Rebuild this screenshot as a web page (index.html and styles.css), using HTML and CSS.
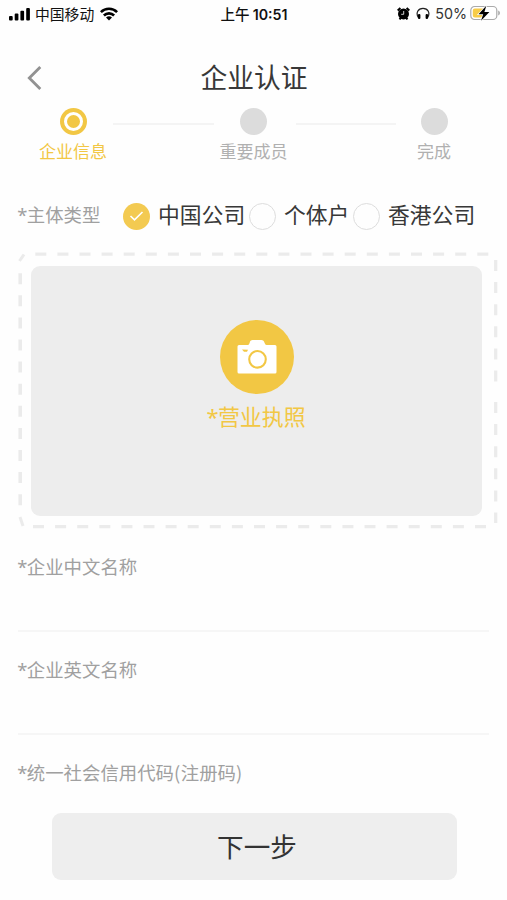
FILE: index.html
```html
<!DOCTYPE html>
<html lang="zh-CN">
<head>
<meta charset="utf-8">
<title>企业认证</title>
<link rel="stylesheet" href="styles.css">
</head>
<body>
<div class="status">
  <div class="status-left">
    <svg width="22" height="14" viewBox="0 0 22 14"><rect x="0" y="9" width="3.7" height="4.400" rx="1"/><rect x="5.700" y="6.600" width="3.700" height="6.800" rx="1"/><rect x="11.400" y="3.800" width="3.700" height="9.600" rx="1"/><rect x="17.200" y="1" width="3.700" height="12.400" rx="1"/></svg>
    <span class="carrier">中国移动</span>
    <svg width="18" height="14" viewBox="0 0 18 14" fill="none" stroke="#000" stroke-width="2.6"><path d="M.9 5.100a11.500 11.500 0 0 1 16.200 0M3.900 8.500a7.200 7.200 0 0 1 10.200 0"/><path d="M9 13.600l-3-3a4.300 4.300 0 0 1 6 0z" fill="#000" stroke="none"/></svg>
  </div>
  <div class="clock">上午 <b>10:51</b></div>
  <div class="status-right">
    <svg width="13" height="13" viewBox="0 0 13 13"><circle cx="6.500" cy="6.900" r="5.500"/><path d="M.7 3.400L3.400.9M12.300 3.400L9.600.9M2.500 12.400l1.500-1.800M10.500 12.400L9 10.600" stroke="#000" stroke-width="2"/><path d="M6.700 4v3.300H4.200" fill="none" stroke="#fff" stroke-width=".8"/></svg>
    <svg class="phones" width="14" height="13" viewBox="0 0 14 13"><path d="M2.600 11C-.8 6 2.200 1.300 7 1.300S14.800 6 11.400 11" fill="none" stroke="#222" stroke-width="1.200"/><rect x="2" y="7" width="2.400" height="5" rx="1"/><rect x="9.600" y="7" width="2.400" height="5" rx="1"/></svg>
    <span class="percent">50%</span>
    <svg width="31" height="17" viewBox="0 0 31 17"><rect x=".8" y="1.500" width="26" height="13" rx="3.800" fill="#fff" stroke="#aaa" stroke-width="1.200"/><path d="M4.800 3.500H14v9H4.800a2 2 0 0 1-2-2v-5a2 2 0 0 1 2-2z" fill="#f7cc48"/><path d="M28.200 5.500v5c2.300-.7 2.300-4.300 0-5z" fill="#aaa"/><path d="M16.300.8L8.500 9.200h4.700L11 15.800l8.400-8.900h-5z" stroke="#fff" stroke-width="1.400" paint-order="stroke"/></svg>
  </div>
</div>
<header class="nav">
  <svg class="back" width="16" height="26" viewBox="0 0 16 26"><path d="M13.300 2L2.300 13l11 11" fill="none" stroke="#929292" stroke-width="2.800"/></svg>
  <h1>企业认证</h1>
</header>
<div class="steps">
  <div class="step active"><i class="dot"><i></i></i><span>企业信息</span></div>
  <i class="line"></i>
  <div class="step"><i class="dot"></i><span>重要成员</span></div>
  <i class="line second-line"></i>
  <div class="step"><i class="dot"></i><span>完成</span></div>
</div>
<main>
  <div class="types">
    <span class="label"><b class="star">*</b>主体类型</span>
    <div class="option first"><i class="radio checked"><svg width="15" height="12" viewBox="0 0 15 12"><path d="M1.500 6l4 3.800L13.500 2" fill="none" stroke="#fff" stroke-width="1.600"/></svg></i><span>中国公司</span></div>
    <div class="option second"><i class="radio"></i><span>个体户</span></div>
    <div class="option"><i class="radio"></i><span>香港公司</span></div>
  </div>
  <div class="upload">
    <svg class="frame" width="481" height="278" viewBox="0 0 481 278" fill="none" stroke="#ebebeb" stroke-width="3.200" stroke-dasharray="11 11.100">
      <path d="M17.300 3.200H472"/>
      <path d="M15 275.600H471"/>
      <path d="M2.200 22.200V257" stroke-width="3.600"/>
      <path d="M477.700 9V132M477.700 151V272"/>
      <path d="M1.500 10L6 3.500M2 266l3 9" stroke-dasharray="none" stroke-width="3"/>
    </svg>
    <div class="panel">
      <div class="camera"><svg width="40" height="36" viewBox="0 0 40 36"><path d="M2 6h9q1 0 1.600-2L13 2.500Q13.500 1 15.500 1h9q2 0 2.500 1.500l.6 1.500Q28.200 6 29.500 6H38q1.500 0 1.500 1.500V33q0 1.500-1.500 1.500H2Q.5 34.500.5 33V7.500Q.5 6 2 6z" fill="#fff"/><circle cx="20.500" cy="20.300" r="8.300" fill="none" stroke="#f2c744" stroke-width="2.100"/><path d="M5 10.500l6 .2-1 2H7z" fill="#f2c744"/></svg></div>
      <span><b class="star">*</b>营业执照</span>
    </div>
  </div>
  <div class="field"><b class="star">*</b>企业中文名称</div>
  <div class="field"><b class="star">*</b>企业英文名称</div>
  <div class="field last"><b class="star">*</b>统一社会信用代码<span class="paren">(</span>注册码<span class="paren">)</span></div>
  <button class="next">下一步</button>
</main>
</body>
</html>
```
FILE: styles.css
```css
* { box-sizing: border-box; }
body {
  margin: 0;
  width: 507px;
  height: 900px;
  overflow: hidden;
  background: #fefefe;
  color: #383838;
  font-family: "Noto Sans CJK SC", sans-serif;
}
svg { display: block; flex: none; }
i { display: block; flex: none; }
span { white-space: nowrap; }
.star {
  display: inline-block;
  width: .48em;
  font-family: "Noto Sans", sans-serif;
  font-weight: 400;
  line-height: 1;
  text-indent: -.04em;
}
.paren { display: inline-block; width: .37em; }
.status {
  display: grid;
  grid-template-columns: 1fr auto 1fr;
  align-items: center;
  height: 28px;
  padding: 0 6px 1px 9px;
  color: #111;
  line-height: 27px;
}
.status-left, .status-right { display: flex; align-items: center; }
.carrier { margin: 0 6px 0 4px; font-size: 14.8px; }
.clock { margin-right: 2px; font-size: 14.5px; font-weight: 500; }
.clock b { font: 600 14.2px Inter, sans-serif; }
.status-right { justify-content: flex-end; }
.phones { margin: 0 5px 0 6px; }
.percent { margin-right: 3px; font: 14.3px Inter, sans-serif; color: #333; }
.nav {
  display: grid;
  grid-template-columns: 50px 1fr 50px;
  align-items: center;
  height: 78px;
  padding-top: 22px;
}
.back { margin-left: 27px; }
.nav h1 {
  margin: -2px 0 0 1px;
  font-size: 26.8px;
  font-weight: 400;
  line-height: 40px;
  text-align: center;
}
.steps { display: flex; height: 80px; padding: 2px 38px 0 38px; }
.step {
  display: flex;
  flex-direction: column;
  align-items: center;
  width: 70px;
  color: #b0b0b0;
  font-size: 17px;
  line-height: 24px;
}
.step span { margin-top: 4px; }
.dot { width: 27px; height: 27px; border-radius: 50%; background: #dcdcdc; }
.active { color: #f2c744; }
.active .dot { padding: 4px; background: #f2c744; }
.active .dot i {
  width: 19px;
  height: 19px;
  border: 3px solid #fff;
  border-radius: 50%;
}
.line { flex: 1; height: 2px; margin: 15px 5px; background: #f4f4f4; }
.second-line { margin: 15px 3px 0 7px; }
main { padding: 0 10px 0 18px; }
.types { display: flex; align-items: center; height: 60px; }
.label { width: 105px; margin-top: -4px; color: #a0a0a0; font-size: 18.4px; line-height: 28px; }
.option { display: flex; align-items: center; font-size: 21.8px; line-height: 32px; }
.option span { margin: -5px 0 0 8px; }
.first { width: 126px; }
.second { width: 104px; }
.radio {
  display: flex;
  align-items: center;
  justify-content: center;
  width: 27px;
  height: 27px;
  border: 1px solid #ddd;
  border-radius: 50%;
}
.checked { border: 0; background: #f3ca51; }
.upload { display: grid; height: 278px; margin-top: 5px; }
.frame { grid-area: 1 / 1; }
.panel {
  grid-area: 1 / 1;
  display: flex;
  flex-direction: column;
  align-items: center;
  width: 451px;
  height: 250px;
  margin: 15px 0 0 13px;
  padding-top: 54px;
  border-radius: 9px;
  background: #ededed;
  color: #f2c744;
  font-size: 21.9px;
  line-height: 32px;
}
.panel span { margin-top: 6px; }
.camera {
  display: flex;
  align-items: center;
  justify-content: center;
  width: 74px;
  height: 74px;
  border-radius: 50%;
  background: #f2c744;
}
.field {
  height: 103px;
  margin-right: 8px;
  padding-top: 23px;
  border-bottom: 2px solid #f6f6f6;
  color: #a0a0a0;
  font-size: 18.4px;
  line-height: 28px;
}
.last { height: 78px; border: 0; }
.next {
  display: block;
  width: 405px;
  height: 67px;
  margin-left: 34px;
  padding: 0 0 3px 5px;
  border: 0;
  border-radius: 9px;
  background: #eee;
  color: #333;
  font: 26.6px "Noto Sans CJK SC", sans-serif;
}
```
